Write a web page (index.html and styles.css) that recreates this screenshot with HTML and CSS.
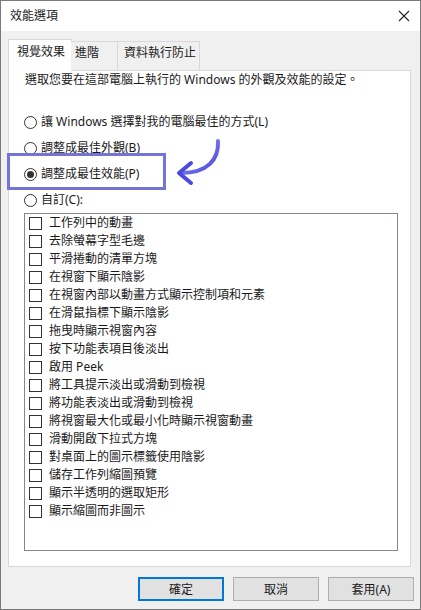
FILE: index.html
```html
<!DOCTYPE html>
<html lang="zh-Hant">
<head>
    <meta charset="UTF-8">
    <title>效能選項</title>
    <link rel="stylesheet" href="styles.css">
</head>
<body>
<div class="window">
    <div class="titlebar">
        <span class="title">效能選項</span>
        <svg class="close" width="12" height="12" viewBox="0 0 12 12">
            <path d="M1 1 L11 11 M11 1 L1 11" stroke="#222" stroke-width="1.1" fill="none"/>
        </svg>
    </div>
    <div class="tabs">
        <div class="tab cur">視覺效果</div>
        <div class="tab t2">進階</div>
        <div class="tab t3">資料執行防止</div>
    </div>
    <div class="panel">
        <p class="intro">選取您要在這部電腦上執行的 Windows 的外觀及效能的設定。</p>
        <ul class="radios">
            <li><span class="radio"></span>讓 Windows 選擇對我的電腦最佳的方式(L)</li>
            <li><span class="radio"></span>調整成最佳外觀(B)</li>
            <li><span class="radio on"></span>調整成最佳效能(P)</li>
            <li><span class="radio"></span>自訂(C):</li>
        </ul>
        <ul class="listbox">
            <li><span class="check"></span>工作列中的動畫</li>
            <li><span class="check"></span>去除螢幕字型毛邊</li>
            <li><span class="check"></span>平滑捲動的清單方塊</li>
            <li><span class="check"></span>在視窗下顯示陰影</li>
            <li><span class="check"></span>在視窗內部以動畫方式顯示控制項和元素</li>
            <li><span class="check"></span>在滑鼠指標下顯示陰影</li>
            <li><span class="check"></span>拖曳時顯示視窗內容</li>
            <li><span class="check"></span>按下功能表項目後淡出</li>
            <li><span class="check"></span>啟用 Peek</li>
            <li><span class="check"></span>將工具提示淡出或滑動到檢視</li>
            <li><span class="check"></span>將功能表淡出或滑動到檢視</li>
            <li><span class="check"></span>將視窗最大化或最小化時顯示視窗動畫</li>
            <li><span class="check"></span>滑動開啟下拉式方塊</li>
            <li><span class="check"></span>對桌面上的圖示標籤使用陰影</li>
            <li><span class="check"></span>儲存工作列縮圖預覽</li>
            <li><span class="check"></span>顯示半透明的選取矩形</li>
            <li><span class="check"></span>顯示縮圖而非圖示</li>
        </ul>
    </div>
    <div class="buttons">
        <button class="btn ok">確定</button>
        <button class="btn">取消</button>
        <button class="btn">套用(A)</button>
    </div>

    <!-- annotation drawn over the dialog -->
    <svg class="mark" width="421" height="610" viewBox="0 0 421 610">
        <defs>
            <linearGradient id="arr" x1="0" y1="0" x2="1" y2="1">
                <stop offset="0" stop-color="#9a9aec"/>
                <stop offset="1" stop-color="#4646e2"/>
            </linearGradient>
        </defs>
        <rect x="8.5" y="154.5" width="156" height="34" fill="none" stroke="#7474d8" stroke-width="3"/>
        <path d="M218 141 C219 160 207 173 181 173" fill="none" stroke="url(#arr)" stroke-width="4" stroke-linecap="round"/>
        <path d="M191 163 L179 173 L191 183" fill="none" stroke="#4a4ae2" stroke-width="4" stroke-linecap="round" stroke-linejoin="round"/>
    </svg>
</div>
</body>
</html>
```

FILE: styles.css
```css
* {
    margin: 0;
    padding: 0;
    list-style: none;
    box-sizing: border-box;
}

body {
    font-family: "Segoe UI", "Noto Sans", "Noto Sans CJK TC", sans-serif;
    font-size: 12px;
    color: #1a1a1a;
    background: #fff;
}

.window {
    width: 421px;
    height: 610px;
    border: 1px solid #7a7a7a;
    background: #f0f0f0;
    position: relative;
    display: flex;
    flex-direction: column;
}

.titlebar {
    height: 30px;
    background: #fff;
    display: flex;
    align-items: center;
    justify-content: space-between;
    padding: 0 10px 0 9px;
}

.title {
    font-size: 12px;
    line-height: 16px;
}

.tabs {
    display: flex;
    align-items: flex-end;
    margin: 8px 0 -1px 7px;
    position: relative;
    z-index: 1;
}

.tab {
    height: 30px;
    border: 1px solid #d9d9d9;
    background: #f0f0f0;
    line-height: 16px;
    padding-top: 3px;
}

.tab.cur {
    width: 64px;
    height: 32px;
    background: #fff;
    border-bottom: none;
    padding: 4px 0 0 8px;
}

.tab.t2 {
    width: 47px;
    margin-left: -1px;
    border-left: none;
    padding-left: 4px;
}

.tab.t3 {
    width: 83px;
    margin-left: -1px;
    padding-left: 6px;
}

.panel {
    height: 497px;
    margin: 0 9px 0 7px;
    background: #fff;
    border: 1px solid #d9d9d9;
}

.intro {
    line-height: 16px;
    padding: 1px 0 0 16px;
}

.radios {
    margin-top: 21px;
    padding-left: 15px;
}

.radios li {
    height: 26px;
    display: flex;
    align-items: center;
    line-height: 16px;
}

.radio {
    width: 13px;
    height: 13px;
    border: 1px solid #333;
    border-radius: 50%;
    margin-right: 4px;
    display: flex;
    align-items: center;
    justify-content: center;
}

.radio.on::after {
    content: "";
    width: 7px;
    height: 7px;
    border-radius: 50%;
    background: #333;
}

.listbox {
    width: 374px;
    height: 338px;
    margin-left: 15px;
    border: 1px solid #828790;
    padding: 0 0 0 4px;
}

.listbox li {
    height: 18px;
    display: flex;
    align-items: center;
    line-height: 16px;
}

.check {
    width: 13px;
    height: 13px;
    border: 1px solid #333;
    margin-right: 7px;
}

.buttons {
    display: flex;
    justify-content: flex-end;
    gap: 9px;
    margin: 10px 6px 0 0;
}

.btn {
    width: 86px;
    height: 24px;
    background: #e1e1e1;
    border: 1px solid #adadad;
    font: inherit;
    color: #1a1a1a;
}

.btn.ok {
    border-color: #0078d7;
    box-shadow: inset 0 0 0 1px #0078d7;
}

.mark {
    position: absolute;
    left: -1px;
    top: -1px;
    pointer-events: none;
}
```
